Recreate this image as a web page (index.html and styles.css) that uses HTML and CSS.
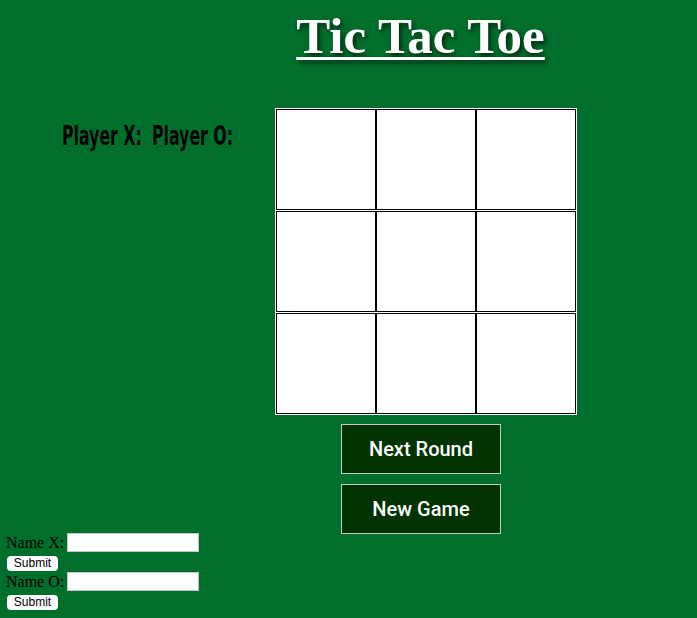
FILE: index.html
```html
<!DOCTYPE html>
<html>
<head>
<meta charset="utf-8">
<title>Tic Tac Toe</title>
<link rel="stylesheet" href="styles.css">
</head>
<body>
<h1 class="title">Tic Tac Toe</h1>
<div class="game">
  <div class="players">
    <span class="player"><span class="player-text">Player X:</span></span>
    <span class="player"><span class="player-text">Player O:</span></span>
  </div>
  <div class="board-col">
    <div class="board">
      <div class="row"><div class="cell"></div><div class="cell"></div><div class="cell"></div></div>
      <div class="row"><div class="cell"></div><div class="cell"></div><div class="cell"></div></div>
      <div class="row"><div class="cell"></div><div class="cell"></div><div class="cell"></div></div>
    </div>
    <div class="controls">
      <button class="btn" type="button">Next Round</button>
      <button class="btn" type="button">New Game</button>
    </div>
  </div>
</div>
<form class="names">
  <div class="name-row"><label>Name X:</label><input class="name-input" type="text"></div>
  <button class="submit" type="button">Submit</button>
  <div class="name-row"><label>Name O:</label><input class="name-input" type="text"></div>
  <button class="submit" type="button">Submit</button>
</form>
</body>
</html>
```

FILE: styles.css
```css
html, body {
  margin: 0;
  padding: 0;
  background: #006f2b;
  height: 100%;
}
body {
  font-family: "Liberation Serif", serif;
  font-size: 16px;
  color: #000;
}
.title {
  margin: 8px 0 0 144px;
  text-align: center;
  font-family: "Liberation Serif", serif;
  font-weight: bold;
  font-size: 51px;
  line-height: 56px;
  color: #fff;
  text-decoration: underline;
  text-decoration-thickness: 3px;
  text-underline-offset: 4px;
  text-shadow: 2px 3px 5px rgba(0, 0, 0, 0.7);
}
.game {
  display: flex;
  margin-top: 44px;
}
.players {
  width: 275px;
  box-sizing: border-box;
  padding: 13px 0 0 62px;
  display: flex;
  font-family: "DejaVu Sans Condensed", "DejaVu Sans", sans-serif;
  font-weight: bold;
  font-size: 27px;
  line-height: 30px;
  color: #000;
  align-items: flex-start;
}
.player {
  width: 90px;
  white-space: nowrap;
}
.player-text {
  display: inline-block;
  transform: scaleX(0.65);
  transform-origin: left center;
}
.board-col {
  width: 302px;
}
.board {
  background: #fff;
  padding: 1px;
  display: flex;
  flex-direction: column;
  gap: 1px;
}
.row {
  display: flex;
}
.cell {
  width: 100px;
  height: 101px;
  box-sizing: border-box;
  border: 1px solid #000;
  background: #fff;
}
.controls {
  margin: 9px 0 0 66px;
  display: flex;
  flex-direction: column;
  gap: 10px;
}
.btn {
  width: 160px;
  height: 50px;
  background: #003300;
  border: 1px solid #c8c8c8;
  color: #fff;
  font-family: Roboto, "Liberation Sans", Arial, sans-serif;
  font-weight: 500;
  font-size: 20px;
  padding: 0;
  margin: 0;
}
.names {
  margin-top: -1px;
  padding-left: 6px;
}
.name-row {
  display: flex;
  align-items: center;
  height: 19px;
  gap: 3px;
  line-height: 19px;
}
.name-input {
  width: 132px;
  height: 19px;
  box-sizing: border-box;
  border: 1px solid #c4c4c4;
  background: #fff;
  padding: 0 2px;
  margin: 0;
}
.submit {
  display: block;
  margin: 4px 0 1px 1px;
  width: 51px;
  height: 15px;
  padding: 0;
  background: #fff;
  border: none;
  border-radius: 4px;
  font-family: "Liberation Sans", Arial, sans-serif;
  font-size: 12px;
  line-height: 15px;
  color: #000;
}
```
